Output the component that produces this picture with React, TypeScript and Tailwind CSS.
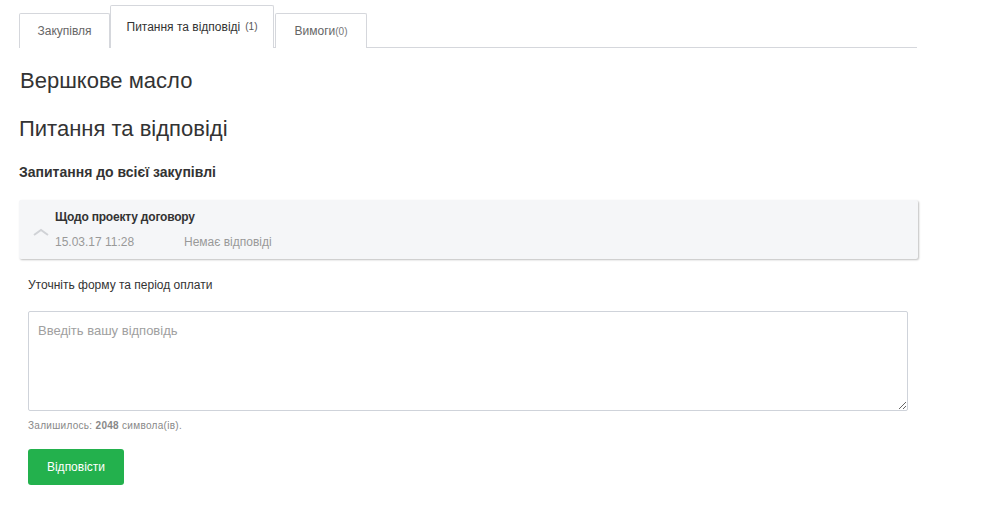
export default function App() {
  return (
    <div className="min-h-[529px] bg-white text-[#333] font-['Liberation_Sans',Arial,sans-serif]">
      <div className="pl-[19px] w-[917px]">
        {/* tabs */}
        <div className="flex items-end border-b border-[#d5d7dc] pt-[5px]">
          <div className="w-[91px] h-[35px] flex items-center justify-center border border-b-0 border-[#d5d7dc] rounded-t-[2px] text-[12px] text-[#666] -mb-px bg-white">
            Закупівля
          </div>
          <div className="w-[164px] h-[43px] flex items-center justify-center border border-b-0 border-[#d5d7dc] rounded-t-[2px] text-[12px] text-[#333] bg-white -mb-px relative z-10 pb-[1px]">
            Питання та відповіді<span className="text-[10px] ml-[5px] text-[#555]">(1)</span>
          </div>
          <div className="w-[92px] h-[35px] flex items-center justify-center border border-b-0 border-[#d5d7dc] rounded-t-[2px] text-[12px] text-[#666] -mb-px bg-white ml-px">
            Вимоги<span className="text-[10px] text-[#777]">(0)</span>
          </div>
        </div>

        <h1 className="text-[22px] leading-none mt-[22px] ml-px text-[#333]">Вершкове масло</h1>
        <h2 className="text-[22px] leading-none mt-[26px] text-[#333]">Питання та відповіді</h2>
        <h3 className="text-[14px] font-bold leading-none mt-[25px] text-[#333]">Запитання до всієї закупівлі</h3>

        {/* question */}
        <div className="mt-[21px] w-[899px] h-[59px] bg-[#f5f6f8] rounded-[2px] shadow-[1px_1px_2px_rgba(0,0,0,0.25)] flex items-center">
          <div className="w-[36px] flex justify-center pl-[8px] pt-[4px]">
            <svg width="16" height="10" viewBox="0 0 16 10">
              <path d="M1 8 L8 3 L15 8" fill="none" stroke="#d0d2d6" strokeWidth="2" />
            </svg>
          </div>
          <div className="flex flex-col -mt-[1px]">
            <div className="text-[12px] font-bold text-[#333] leading-none tracking-[-0.2px]">Щодо проекту договору</div>
            <div className="flex text-[12px] text-[#999] leading-none mt-[13px]">
              <span className="w-[129px]">15.03.17 11:28</span>
              <span>Немає відповіді</span>
            </div>
          </div>
        </div>

        <div className="pl-[9px]">
          <div className="text-[12px] text-[#333] mt-[20px] leading-none">Уточніть форму та період оплати</div>
          <textarea
            placeholder="Введіть вашу відповідь"
            className="block mt-[20px] w-[880px] h-[100px] border border-[#cfd3da] rounded-[2px] px-[9px] py-[9px] text-[13px] text-[#333] placeholder:text-[#a0a0a0] outline-none"
          />
          <div className="text-[10px] text-[#888] mt-[10px] leading-none tracking-[0.3px]">
            Залишилось: <b>2048</b> символа(ів).
          </div>
          <button className="mt-[18px] w-[96px] h-[36px] bg-[#23b14d] rounded-[3px] text-white text-[12px]">
            Відповісти
          </button>
        </div>
      </div>
    </div>
  );
}
